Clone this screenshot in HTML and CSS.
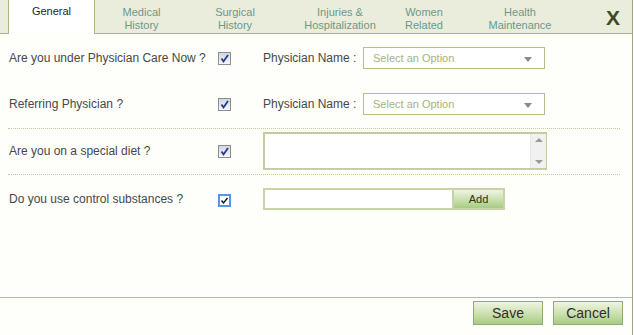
FILE: index.html
```html
<!DOCTYPE html>
<html lang="en">
<head>
    <meta charset="UTF-8" />
    <title>Patient History - General</title>
    <link rel="stylesheet" href="styles.css">
</head>
<body>
<div class="dialog">
    <div class="tabs">
        <div class="tab active t-general">General</div>
        <div class="tab t-medical">Medical<br>History</div>
        <div class="tab t-surgical">Surgical<br>History</div>
        <div class="tab t-injuries">Injuries &amp;<br>Hospitalization</div>
        <div class="tab t-women">Women<br>Related</div>
        <div class="tab t-health">Health<br>Maintenance</div>
        <div class="close">X</div>
    </div>

    <div class="content">
        <div class="group g-physician">
            <div class="row">
                <span class="label">Are you under Physician Care Now ?</span>
                <span class="check"><svg width="11" height="11" viewBox="0 0 11 11"><path d="M2.5 5.5 L4.5 8.5 L9 2" fill="none" stroke="#23389a" stroke-width="1.8"/></svg></span>
                <span class="field-label">Physician Name :</span>
                <div class="select"><span>Select an Option</span><span class="arrow"></span></div>
            </div>
            <div class="row">
                <span class="label">Referring Physician ?</span>
                <span class="check"><svg width="11" height="11" viewBox="0 0 11 11"><path d="M2.5 5.5 L4.5 8.5 L9 2" fill="none" stroke="#23389a" stroke-width="1.8"/></svg></span>
                <span class="field-label">Physician Name :</span>
                <div class="select"><span>Select an Option</span><span class="arrow"></span></div>
            </div>
        </div>

        <div class="group g-diet">
            <div class="row tall">
                <span class="label">Are you on a special diet ?</span>
                <span class="check"><svg width="11" height="11" viewBox="0 0 11 11"><path d="M2.5 5.5 L4.5 8.5 L9 2" fill="none" stroke="#23389a" stroke-width="1.8"/></svg></span>
                <div class="textarea">
                    <div class="scrollbar">
                        <span class="up"></span>
                        <span class="down"></span>
                    </div>
                </div>
            </div>
        </div>

        <div class="group g-substances">
            <div class="row">
                <span class="label">Do you use control substances ?</span>
                <span class="check focused"><svg width="9" height="9" viewBox="0 0 9 9"><path d="M1.5 4.5 L3.5 7 L7.5 2" fill="none" stroke="#111" stroke-width="1.4"/></svg></span>
                <div class="text-input"></div>
                <button class="btn btn-small">Add</button>
            </div>
        </div>
    </div>

    <div class="footer">
        <button class="btn">Save</button>
        <button class="btn">Cancel</button>
    </div>
</div>
</body>
</html>
```

FILE: styles.css
```css
* {
    box-sizing: border-box;
}
body {
    margin: 0;
    padding: 0;
    font-family: Arial, "Liberation Sans", sans-serif;
    background-color: #fefefb;
}
.dialog {
    width: 633px;
    height: 335px;
    border-right: 1px solid #9fa88a;
    display: flex;
    flex-direction: column;
    background-color: #fefefb;
}
/* tabs */
.tabs {
    height: 34px;
    display: flex;
    padding-left: 8px;
    background-color: #eaeddc;
    border-bottom: 1px solid #a9b780;
}
.tab {
    padding-top: 6px;
    font-size: 11px;
    line-height: 13px;
    text-align: center;
    color: #6a988b;
}
.tab.active {
    background-color: #ffffff;
    color: #1e1e1e;
    border-left: 1px solid #a9b780;
    border-right: 1px solid #a9b780;
    height: 34px;
    padding-top: 5px;
}
.t-general { width: 87px; }
.t-medical { width: 93px; }
.t-surgical { width: 94px; }
.t-injuries { width: 116px; }
.t-women { width: 52px; }
.t-health { width: 140px; }
.close {
    flex: 1;
    text-align: right;
    padding-right: 12px;
    padding-top: 6px;
    font-size: 21px;
    font-weight: bold;
    color: #3e4b22;
}
/* form */
.content {
    flex: 1;
}
.group {
    margin: 0 12px 0 8px;
    border-bottom: 1px dotted #c3c99d;
}
.g-physician {
    padding: 13px 0 13px 1px;
    display: flex;
    flex-direction: column;
    gap: 24px;
}
.g-diet {
    padding: 3px 0 4px 1px;
}
.g-substances {
    padding: 13px 0 0 1px;
    border-bottom: none;
}
.row {
    display: flex;
    align-items: center;
    height: 22px;
}
.row.tall {
    height: 38px;
}
.label {
    width: 209px;
    font-size: 12px;
    color: #484848;
}
.field-label {
    width: 100px;
    font-size: 12px;
    color: #484848;
}
.check {
    width: 13px;
    height: 13px;
    margin-right: 32px;
    border: 1px solid #8c8f95;
    background: linear-gradient(#d4d6da, #f6f7f9);
    display: flex;
    align-items: center;
    justify-content: center;
}
.check.focused {
    border: 2px solid #5b93ec;
    background: #ffffff;
    margin-top: 2px;
}
.select {
    width: 182px;
    height: 22px;
    border: 1px solid #b3c288;
    background-color: #ffffff;
    display: flex;
    align-items: center;
    justify-content: space-between;
    padding: 0 12px 0 9px;
    font-size: 11px;
    color: #a3b47a;
}
.arrow {
    width: 0;
    height: 0;
    border-left: 4px solid transparent;
    border-right: 4px solid transparent;
    border-top: 5px solid #8a8a8a;
    margin-top: 2px;
}
.textarea {
    width: 284px;
    height: 38px;
    border: 1px solid #c3cea0;
    border-width: 2px 1px 2px 2px;
    background-color: #ffffff;
    display: flex;
    justify-content: flex-end;
}
.scrollbar {
    width: 16px;
    background-color: #f1f1f1;
    border-left: 1px solid #e6e6e6;
    display: flex;
    flex-direction: column;
    justify-content: space-between;
    align-items: center;
    padding: 4px 0;
}
.scrollbar .up {
    border-left: 4px solid transparent;
    border-right: 4px solid transparent;
    border-bottom: 4px solid #9a9a9a;
}
.scrollbar .down {
    border-left: 4px solid transparent;
    border-right: 4px solid transparent;
    border-top: 4px solid #9a9a9a;
}
.text-input {
    width: 189px;
    height: 22px;
    border: 2px solid #c8d3a8;
    border-right: none;
    background-color: #ffffff;
}
/* buttons */
.btn {
    font-family: Arial, "Liberation Sans", sans-serif;
    width: 70px;
    height: 24px;
    padding: 0;
    font-size: 14px;
    color: #2e2e2e;
    border: 1px solid #90ad6c;
    background: linear-gradient(#eef5e2, #c9e0ad 55%, #a8cb83);
    cursor: pointer;
}
.btn-small {
    width: 53px;
    height: 22px;
    font-size: 11px;
    border: 2px solid #c8d3a8;
}
.footer {
    height: 38px;
    border-top: 1px solid #b0c188;
    display: flex;
    justify-content: flex-end;
    gap: 10px;
    padding: 3px 9px 0 0;
}
```
